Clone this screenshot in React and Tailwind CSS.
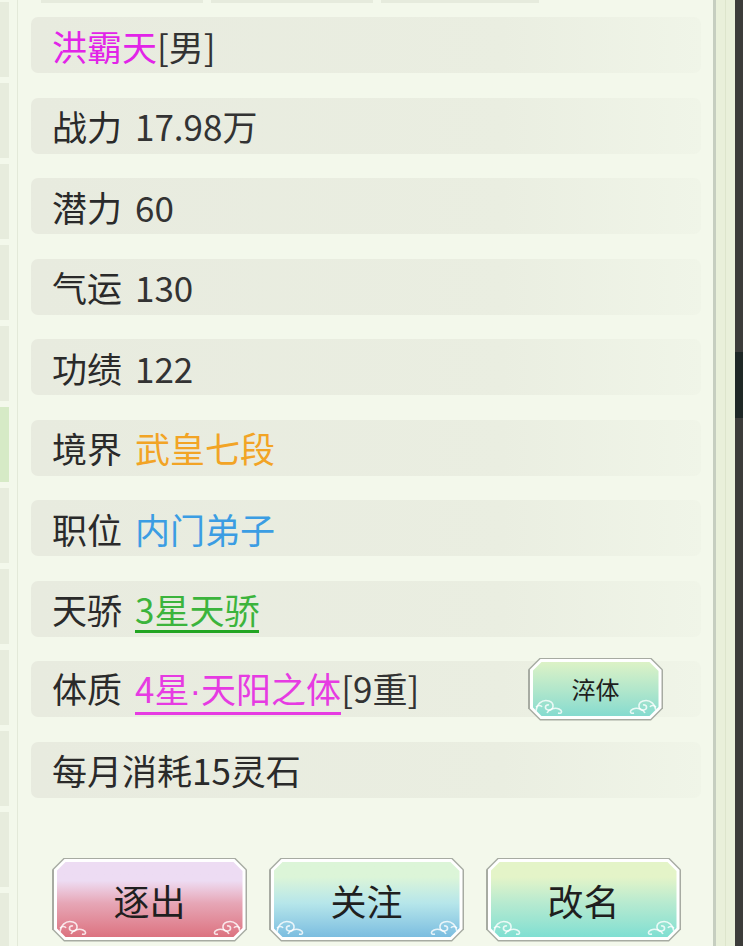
import React from "react";

const font = { fontFamily: '"Noto Sans CJK SC", "Noto Sans", sans-serif' };

function Cloud({ flip }) {
  return (
    <svg
      width="34"
      height="22"
      viewBox="0 0 34 22"
      className={flip ? "absolute bottom-[2px] right-[2px] -scale-x-100" : "absolute bottom-[2px] left-[2px]"}
      fill="none"
      stroke="white"
      strokeWidth="1.6"
      strokeOpacity="0.8"
    >
      <path d="M1 21 C1 12 7 7 14 9 C20 11 19 19 13 18 C9 17 10 12 14 13" />
      <path d="M12 21 C14 17 20 15 24 17 C28 19 27 22 23 21" />
      <path d="M1 15 C3 13 6 13 7 15" />
    </svg>
  );
}

function GameButton({ label, grad, size, text }) {
  return (
    <div
      className={`${size} p-[1.5px] bg-[#a7aba2] [clip-path:polygon(12px_0,calc(100%_-_12px)_0,100%_12px,100%_calc(100%_-_12px),calc(100%_-_12px)_100%,12px_100%,0_calc(100%_-_12px),0_12px)]`}
    >
      <div className="w-full h-full p-[3px] bg-white [clip-path:polygon(11px_0,calc(100%_-_11px)_0,100%_11px,100%_calc(100%_-_11px),calc(100%_-_11px)_100%,11px_100%,0_calc(100%_-_11px),0_11px)]">
        <div
          className={`relative w-full h-full flex items-center justify-center ${grad} [clip-path:polygon(9px_0,calc(100%_-_9px)_0,100%_9px,100%_calc(100%_-_9px),calc(100%_-_9px)_100%,9px_100%,0_calc(100%_-_9px),0_9px)]`}
        >
          <span className={`${text} text-[#1f1f1f] leading-none`}>{label}</span>
          <Cloud />
          <Cloud flip />
        </div>
      </div>
    </div>
  );
}

function Row({ children, extra }) {
  return (
    <div className="h-[56px] rounded-[7px] bg-linear-to-r from-[#e8ebdf] via-[#eaeee1] via-70% to-[#f0f5e8] flex items-center pl-[21px] shrink-0">
      <div className="flex items-baseline text-[35px] leading-none text-[#2a2a2a]">{children}</div>
      {extra}
    </div>
  );
}

export default function App() {
  const leftCells = [0, 1, 2, 3, 4, 5, 6, 7, 8, 9, 10, 11];

  return (
    <div className="w-[743px] h-[946px] flex bg-[#f3f8eb] overflow-hidden" style={font}>
      {/* left list strip */}
      <div className="w-[9px] flex flex-col gap-[6px] pt-[2px]">
        {leftCells.map((i) => (
          <div key={i} className={`h-[75px] shrink-0 ${i === 5 ? "bg-[#d6eac6]" : "bg-[#e7ecdd]"}`} />
        ))}
      </div>
      <div className="w-[8px]" />
      <div className="w-px bg-[#e3e9d9]" />

      {/* main panel */}
      <div className="w-[695px] flex flex-col pl-[13px] pr-[12px]">
        <div className="flex h-[3px] gap-[8px] pl-[10px]">
          <div className="w-[162px] bg-[#e6ebdd]" />
          <div className="w-[162px] bg-[#e6ebdd]" />
          <div className="w-[158px] bg-[#e6ebdd]" />
        </div>

        <div className="flex flex-col gap-[24.5px] mt-[14px]">
          <Row>
            <span className="text-[#e224e8]">洪霸天</span>
            <span className="text-[#333]">[男]</span>
          </Row>
          <Row>
            <span>战力</span>
            <span className="ml-[13px] text-[#333]">17.98万</span>
          </Row>
          <Row>
            <span>潜力</span>
            <span className="ml-[13px] text-[#333]">60</span>
          </Row>
          <Row>
            <span>气运</span>
            <span className="ml-[13px] text-[#333]">130</span>
          </Row>
          <Row>
            <span>功绩</span>
            <span className="ml-[13px] text-[#333]">122</span>
          </Row>
          <Row>
            <span>境界</span>
            <span className="ml-[13px] text-[#f2a425]">武皇七段</span>
          </Row>
          <Row>
            <span>职位</span>
            <span className="ml-[13px] text-[#3b9de3]">内门弟子</span>
          </Row>
          <Row>
            <span>天骄</span>
            <span className="ml-[13px] text-[#3cb43c] border-b-[3px] border-[#22a522] pb-[4px] -mb-[7px]">3星天骄</span>
          </Row>
          <Row
            extra={
              <div className="ml-auto mr-[38px]">
                <GameButton
                  label="淬体"
                  size="w-[135px] h-[63px]"
                  text="text-[24px]"
                  grad="bg-linear-to-b from-[#dcf2c6] to-[#85dbcf]"
                />
              </div>
            }
          >
            <span>体质</span>
            <span className="ml-[13px] text-[#e63be2] border-b-[3px] border-[#e63be2] pb-[4px] -mb-[7px]">
              4星<span className="font-['Liberation_Sans',sans-serif]">·</span>天阳之体
            </span>
            <span className="text-[#333]">[9重]</span>
          </Row>
          <Row>
            <span>每月消耗15灵石</span>
          </Row>
        </div>

        <div className="flex gap-[22px] mt-[60px] pl-[21px]">
          <GameButton
            label="逐出"
            size="w-[195px] h-[84px]"
            text="text-[36px]"
            grad="bg-linear-to-b from-[#eddcf3] from-25% via-[#e6a6b6] via-55% to-[#dc7280]"
          />
          <GameButton
            label="关注"
            size="w-[195px] h-[84px]"
            text="text-[36px]"
            grad="bg-linear-to-b from-[#dcf5d8] from-20% via-[#b6e6ea] via-55% to-[#7bbde0]"
          />
          <GameButton
            label="改名"
            size="w-[195px] h-[84px]"
            text="text-[36px]"
            grad="bg-linear-to-b from-[#e4f4c8] from-20% via-[#b6ead0] via-55% to-[#7fdfd2]"
          />
        </div>
      </div>

      {/* right frame */}
      <div className="w-[3px] bg-[#c6cec0]" />
      <div className="w-[19px] bg-[#e9f0da] flex">
        <div className="w-[9px]" />
        <div className="w-px bg-[#dde5cc]" />
      </div>
      <div className="w-[8px] bg-[#3c3c3a] flex flex-col">
        <div className="h-[352px]" />
        <div className="h-[66px] bg-[#1e2726]" />
      </div>
    </div>
  );
}
